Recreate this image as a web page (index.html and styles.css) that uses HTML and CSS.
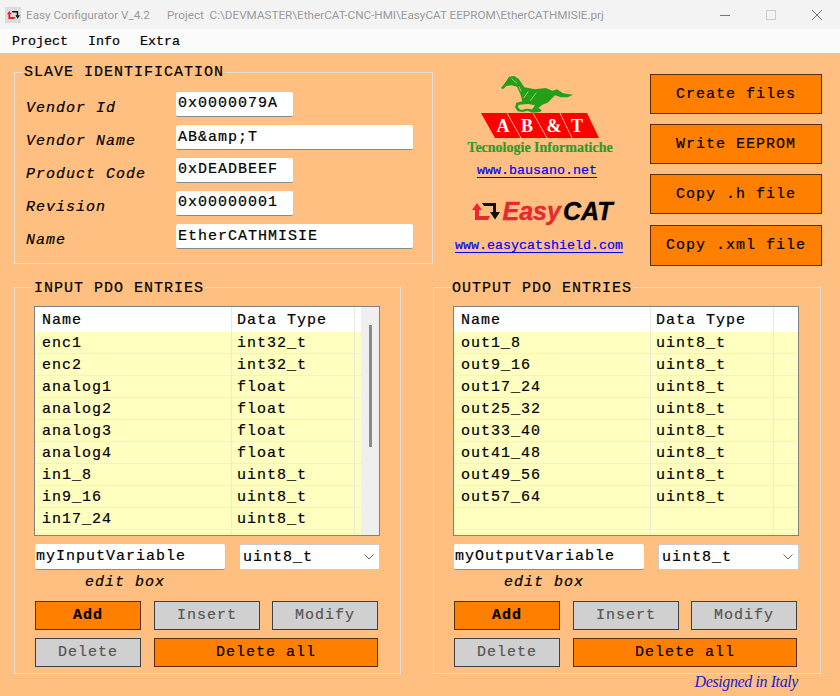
FILE: index.html
```html
<!DOCTYPE html>
<html lang="en">
<head>
<meta charset="utf-8">
<title>Easy Configurator</title>
<link rel="stylesheet" href="styles.css">
</head>
<body>
<div class="window">
  <header class="titlebar">
    <span class="app-icon">
      <svg width="13" height="8" viewBox="0 0 28 17"><path d="M0 7L5 0l5 7H7v6h11l-2 4H3V7z" fill="#e8202a"/><path d="M10 0h14v9h4l-5 7.500L18 9h3V3H12z" fill="#111"/></svg>
    </span>
    <span class="title-app">Easy Configurator V_4.2</span>
    <span class="title-project">Project&nbsp; C:\DEVMASTER\EtherCAT-CNC-HMI\EasyCAT EEPROM\EtherCATHMISIE.prj</span>
    <span class="win-controls">
      <svg width="12" height="12" viewBox="0 0 12 12"><path d="M1 6.500h10" stroke="#777" fill="none"/></svg>
      <svg width="12" height="12" viewBox="0 0 12 12"><rect x="1.500" y="1.500" width="9" height="9" stroke="#ccc" fill="none"/></svg>
      <svg width="12" height="12" viewBox="0 0 12 12"><path d="M1 1l10 10M11 1L1 11" stroke="#777" fill="none"/></svg>
    </span>
  </header>
  <nav class="menubar"><span>Project</span><span>Info</span><span>Extra</span></nav>
  <main class="content">
    <section class="top-row">
      <fieldset class="group slave">
        <legend>SLAVE IDENTIFICATION</legend>
        <div class="field"><label>Vendor Id</label><span class="input short">0x0000079A</span></div>
        <div class="field"><label>Vendor Name</label><span class="input long">AB&amp;amp;T</span></div>
        <div class="field"><label>Product Code</label><span class="input short">0xDEADBEEF</span></div>
        <div class="field"><label>Revision</label><span class="input short">0x00000001</span></div>
        <div class="field"><label>Name</label><span class="input long">EtherCATHMISIE</span></div>
      </fieldset>
      <div class="logos">
        <svg class="horse" width="80" height="44" viewBox="0 0 240 132">
          <path fill-rule="evenodd" d="M18 48L32 30 42 14 58 12 72 22 88 46 120 52 152 48 172 56 186 52 204 64 234 68 218 76 198 76 180 70 172 78 158 92 142 98 130 108 140 114 136 120 112 122 98 116 82 120 68 118 60 106 64 92 82 88 76 66 66 44 50 40 34 42 24 52ZM72 98L68 106 78 114 96 110 112 112 120 100 100 96Z" fill="#23a017"/>
          <path d="M50 20L66 34M100 58L86 78M124 62L106 86M72 44L78 58M116 100L108 112" stroke="#ffd9a8" stroke-width="2" fill="none"/>
        </svg>
        <svg class="abt" width="118" height="25" viewBox="0 0 118 25">
          <polygon points="0,0 106,0 118,25 14,25" fill="#f00"/>
          <path d="M26 0L40 25M52 0L66 25M79 0L91 25" stroke="#ffb0a0" stroke-width="1" fill="none"/>
          <text x="22" y="18.500" class="abt-letter">A</text>
          <text x="46" y="18.500" class="abt-letter">B</text>
          <text x="73" y="18.500" class="abt-letter">&amp;</text>
          <text x="96" y="18.500" class="abt-letter">T</text>
        </svg>
        <div class="tecno">Tecnologie Informatiche</div>
        <a class="link link-top">www.bausano.net</a>
        <div class="easycat">
          <svg width="28" height="17" viewBox="0 0 28 17"><path d="M0 7L5 0l5 7H7v6h11l-2 4H3V7z" fill="#e8282e"/><path d="M10 0h14v9h4l-5 7.500L18 9h3V3H12z" fill="#111"/></svg>
          <span class="easy">Easy</span><span class="cat">CAT</span>
        </div>
        <a class="link">www.easycatshield.com</a>
      </div>
      <div class="actions">
        <button class="btn action">Create files</button>
        <button class="btn action">Write EEPROM</button>
        <button class="btn action">Copy .h file</button>
        <button class="btn action tall">Copy .xml file</button>
      </div>
    </section>
    <section class="pdo-row">
      <fieldset class="group pdo">
        <legend>INPUT PDO ENTRIES</legend>
        <div class="table">
          <div class="table-main">
            <div class="row head"><span class="c1">Name</span><span class="c2">Data Type</span><span class="c3"></span></div>
            <div class="row"><span class="c1">enc1</span><span class="c2">int32_t</span><span class="c3"></span></div>
            <div class="row"><span class="c1">enc2</span><span class="c2">int32_t</span><span class="c3"></span></div>
            <div class="row"><span class="c1">analog1</span><span class="c2">float</span><span class="c3"></span></div>
            <div class="row"><span class="c1">analog2</span><span class="c2">float</span><span class="c3"></span></div>
            <div class="row"><span class="c1">analog3</span><span class="c2">float</span><span class="c3"></span></div>
            <div class="row"><span class="c1">analog4</span><span class="c2">float</span><span class="c3"></span></div>
            <div class="row"><span class="c1">in1_8</span><span class="c2">uint8_t</span><span class="c3"></span></div>
            <div class="row"><span class="c1">in9_16</span><span class="c2">uint8_t</span><span class="c3"></span></div>
            <div class="row"><span class="c1">in17_24</span><span class="c2">uint8_t</span><span class="c3"></span></div>
            <div class="row partial"><span class="c1"></span><span class="c2"></span><span class="c3"></span></div>
          </div>
          <div class="scroll"><div class="thumb"></div></div>
        </div>
        <div class="edit-line"><span class="input edit">myInputVariable</span><span class="select"><span>uint8_t</span><svg width="10" height="6" viewBox="0 0 10 6"><path d="M.5.5L5 5 9.500.5" fill="none" stroke="#666"/></svg></span></div>
        <div class="edit-caption">edit box</div>
        <div class="btn-grid">
          <button class="btn strong">Add</button>
          <button class="btn off">Insert</button>
          <button class="btn off">Modify</button>
          <button class="btn off">Delete</button>
          <button class="btn wide">Delete all</button>
        </div>
      </fieldset>
      <fieldset class="group pdo">
        <legend>OUTPUT PDO ENTRIES</legend>
        <div class="table">
          <div class="table-main">
            <div class="row head"><span class="c1">Name</span><span class="c2">Data Type</span><span class="c3"></span></div>
            <div class="row"><span class="c1">out1_8</span><span class="c2">uint8_t</span><span class="c3"></span></div>
            <div class="row"><span class="c1">out9_16</span><span class="c2">uint8_t</span><span class="c3"></span></div>
            <div class="row"><span class="c1">out17_24</span><span class="c2">uint8_t</span><span class="c3"></span></div>
            <div class="row"><span class="c1">out25_32</span><span class="c2">uint8_t</span><span class="c3"></span></div>
            <div class="row"><span class="c1">out33_40</span><span class="c2">uint8_t</span><span class="c3"></span></div>
            <div class="row"><span class="c1">out41_48</span><span class="c2">uint8_t</span><span class="c3"></span></div>
            <div class="row"><span class="c1">out49_56</span><span class="c2">uint8_t</span><span class="c3"></span></div>
            <div class="row"><span class="c1">out57_64</span><span class="c2">uint8_t</span><span class="c3"></span></div>
            <div class="row"><span class="c1"></span><span class="c2"></span><span class="c3"></span></div>
            <div class="row partial"><span class="c1"></span><span class="c2"></span><span class="c3"></span></div>
          </div>
        </div>
        <div class="edit-line"><span class="input edit">myOutputVariable</span><span class="select"><span>uint8_t</span><svg width="10" height="6" viewBox="0 0 10 6"><path d="M.5.5L5 5 9.500.5" fill="none" stroke="#666"/></svg></span></div>
        <div class="edit-caption">edit box</div>
        <div class="btn-grid">
          <button class="btn strong">Add</button>
          <button class="btn off">Insert</button>
          <button class="btn off">Modify</button>
          <button class="btn off">Delete</button>
          <button class="btn wide">Delete all</button>
        </div>
      </fieldset>
    </section>
    <footer class="credit">Designed in Italy</footer>
  </main>
</div>
</body>
</html>
```
FILE: styles.css
```css
* { box-sizing: border-box; }
html, body { margin: 0; padding: 0; }
body { width: 840px; height: 696px; overflow: hidden; font-family: "Liberation Mono", monospace; font-size: 15px; letter-spacing: 1px; color: #000; -webkit-text-stroke: .2px currentColor; }
.window { width: 840px; height: 696px; display: flex; flex-direction: column; }

.titlebar { height: 29px; flex: none; background: #f3f3f3; display: flex; align-items: center; padding-left: 5px; font-family: Roboto, "Open Sans", sans-serif; font-size: 11.700px; letter-spacing: 0; -webkit-text-stroke: 0; color: #9a9a9a; white-space: nowrap; }
.app-icon { width: 16px; height: 16px; background: #dcdcdc; display: flex; align-items: center; justify-content: center; margin-right: 5px; }
.title-app { width: 141px; }
.title-project { flex: 1; }
.win-controls { display: flex; gap: 34px; margin-right: 17px; }

.menubar { height: 24px; flex: none; background: #fbfbfb; display: flex; align-items: center; gap: 20px; padding-left: 12px; font-size: 13.330px; letter-spacing: 0; }

.content { flex: 1; background: #ffbf80; padding: 11px 0 0 14px; display: flex; flex-direction: column; }
.top-row { display: flex; height: 215px; flex: none; }

.group { margin: 0; border: 1px solid #e0dcd6; padding: 0; min-width: 0; }
.group legend { padding: 0 1px; line-height: 16px; white-space: nowrap; }

.slave { width: 419px; height: 200px; padding: 8px 0 0 11px; flex: none; }
.slave legend { margin-left: -3px; transform: translateY(1px); }
.field { display: flex; align-items: center; height: 33px; }
.field label { width: 150px; font-style: italic; margin-top: 8px; }

.input { background: #fff; display: block; border-radius: 2px; border-bottom: 1px solid #8a8a8a; white-space: nowrap; padding-left: 2px; }
.short { width: 117px; height: 25px; line-height: 24px; }
.long { width: 237px; height: 25px; line-height: 25px; }

.logos { width: 217px; flex: none; display: flex; flex-direction: column; align-items: center; padding: 8px 5px 0 0; }
.horse { display: block; margin: 0 8px -3px 0; flex: none; }
.abt { display: block; flex: none; margin-left: 2px; }
.abt-letter { fill: #fff; stroke: none; font-family: "Liberation Serif", serif; font-weight: bold; font-size: 18px; letter-spacing: 0; text-anchor: middle; }
.tecno { margin: 1px 0 0 2px; font-family: "Liberation Serif", serif; font-weight: bold; font-size: 14px; letter-spacing: 0; color: #2f9a2b; line-height: 17px; white-space: nowrap; }
.link { color: #00f; text-decoration: underline; text-underline-offset: 3px; font-size: 13.330px; letter-spacing: 0; line-height: 16px; }
.link-top { margin: 7px 4px 0 0; }
.easycat { display: flex; align-items: center; height: 26px; margin: 19px 0 14px 6px; font-family: "Liberation Sans", sans-serif; font-weight: bold; font-style: italic; font-size: 25px; letter-spacing: 0; -webkit-text-stroke: .4px currentColor; }
.easycat svg { margin-right: 3px; }
.easy { color: #e8282e; margin-right: 2px; }
.cat { color: #000; }

.actions { width: 172px; flex: none; display: flex; flex-direction: column; gap: 10px; padding-top: 10px; }

.btn { font-family: "Liberation Mono", monospace; font-size: 15px; letter-spacing: 1px; padding: 0; border: 1px solid #5a2e0a; background: #ff8000; color: #000; -webkit-text-stroke: .2px currentColor; }
.action { height: 40px; flex: none; }
.tall { height: 41px; margin-top: 1px; }

.pdo-row { display: flex; gap: 32px; flex: none; }
.pdo { width: 387px; height: 395px; padding: 11px 0 0 20px; flex: none; }
.pdo:last-child { width: 388px; }
.pdo legend { margin-left: -2px; transform: translateY(2px); }
.pdo:last-child legend { margin-left: -3px; }

.table { width: 346px; height: 230px; margin-left: -1px; border: 1px solid #808080; background: #ffffc0; display: flex; overflow: hidden; }
.table-main { flex: 1; min-width: 0; }
.scroll { width: 18px; flex: none; background: #efefef; display: flex; justify-content: center; padding-top: 18px; }
.thumb { width: 3px; height: 122px; background: #8a8a8a; margin-right: 0; }
.row { display: flex; height: 22px; line-height: 23px; border-bottom: 1px solid #f0f0d8; }
.row.partial { height: 4px; }
.row.head { height: 25px; background: #fff; border-bottom: 0; line-height: 27px; }
.c1 { width: 197px; padding-left: 7px; border-right: 1px solid #ecead8; flex: none; }
.c2 { width: 123px; padding-left: 5px; border-right: 1px solid #ecead8; flex: none; }
.c3 { flex: 1; }

.edit-line { display: flex; justify-content: space-between; width: 345px; margin: 8px 0 0 0; }
.edit { width: 190px; height: 26px; line-height: 25px; padding-left: 1px; }
.select { width: 141px; height: 26px; background: #fff; border: 1px solid #c8ccd8; border-radius: 2px; display: flex; align-items: center; justify-content: space-between; padding: 0 5px 0 3px; }

.edit-caption { margin: 5px 0 0 50px; font-style: italic; line-height: 16px; }

.btn-grid { display: grid; width: 343px; margin: 10px 0 0 0; grid-template-columns: 119px 118px 106px; row-gap: 8px; }
.btn-grid .btn { height: 29px; width: 106px; }
.strong { font-weight: bold; }
.btn.off { background: #d0d0d0; color: #555; border-color: #404040; }
.btn-grid .wide { grid-column: span 2; width: 224px; }

.credit { align-self: flex-end; margin: -1px 42px 0 0; font-family: "Liberation Serif", serif; font-style: italic; color: #1a1ad0; font-size: 16px; letter-spacing: -.4px; line-height: 18px; -webkit-text-stroke: 0; }
```
